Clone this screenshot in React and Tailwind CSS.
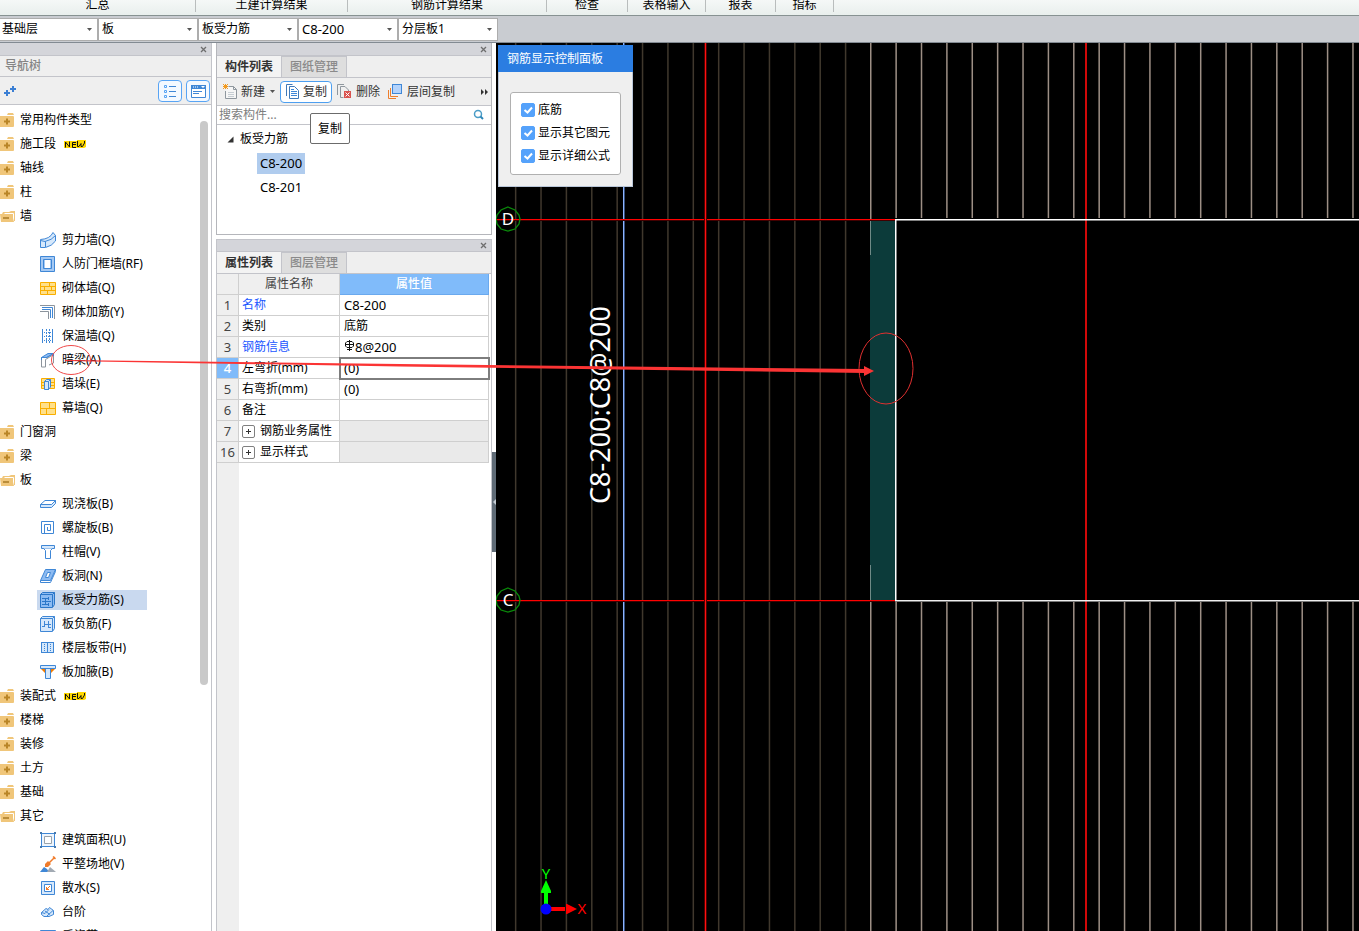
import React from "react";

const RIBBON = [
  { label: "汇总", width: "w-[196px]" },
  { label: "土建计算结果", width: "w-[152px]" },
  { label: "钢筋计算结果", width: "w-[199px]" },
  { label: "检查", width: "w-[81px]" },
  { label: "表格输入", width: "w-[78px]" },
  { label: "报表", width: "w-[70px]" },
  { label: "指标", width: "w-[58px]" },
];

const SELECTORS = [
  { label: "楼层", value: "基础层" },
  { label: "构件大类", value: "板" },
  { label: "构件类型", value: "板受力筋" },
  { label: "构件", value: "C8-200" },
  { label: "分层", value: "分层板1" },
];

const TREE = [
  { label: "常用构件类型" },
  { label: "施工段", isNew: true },
  { label: "轴线" },
  { label: "柱" },
  {
    label: "墙",
    children: [
      { label: "剪力墙(Q)", icon: "shearWall" },
      { label: "人防门框墙(RF)", icon: "doorFrame" },
      { label: "砌体墙(Q)", icon: "brick" },
      { label: "砌体加筋(Y)", icon: "corner" },
      { label: "保温墙(Q)", icon: "insulation" },
      { label: "暗梁(A)", icon: "hiddenBeam" },
      { label: "墙垛(E)", icon: "pier" },
      { label: "幕墙(Q)", icon: "curtain" },
    ],
  },
  { label: "门窗洞" },
  { label: "梁" },
  {
    label: "板",
    children: [
      { label: "现浇板(B)", icon: "slab" },
      { label: "螺旋板(B)", icon: "spiral" },
      { label: "柱帽(V)", icon: "cap" },
      { label: "板洞(N)", icon: "hole" },
      { label: "板受力筋(S)", icon: "rebar", selected: true },
      { label: "板负筋(F)", icon: "negRebar" },
      { label: "楼层板带(H)", icon: "band" },
      { label: "板加腋(B)", icon: "haunch" },
    ],
  },
  { label: "装配式", isNew: true },
  { label: "楼梯" },
  { label: "装修" },
  { label: "土方" },
  { label: "基础" },
  {
    label: "其它",
    children: [
      { label: "建筑面积(U)", icon: "area" },
      { label: "平整场地(V)", icon: "ground" },
      { label: "散水(S)", icon: "apron" },
      { label: "台阶", icon: "steps" },
      { label: "后浇带", icon: "strip" },
    ],
  },
];

const B = "#3f87d6";
const L = "#d6e8fb";
const Y = "#f9ae00";

const ICONS = {
  shearWall: (
    <>
      <path d="M.5 7.500Q10 7 13 .5L15.500 3.500V9Q12 14 5.500 15.500H.5Z" fill={L} stroke={B} />
      <path d="M.5 8.500L5 9.500Q12 8 15.500 3.500M5.500 9.500V15" fill="none" stroke={B} />
    </>
  ),
  doorFrame: (
    <>
      <path d="M.5.5H14.500V15.500H.5Z" fill="#a5c9f3" stroke={B} />
      <path d="M3.500 3.500H11.500V12.500H3.500Z" fill="#a5c9f3" stroke={B} />
      <path d="M5 4H10V12H5Z" fill="#fff" />
    </>
  ),
  brick: (
    <>
      <path d="M.5 2.500H15.500V14.500H.5Z" fill="#ffe08a" stroke={Y} />
      <path d="M0 6.500H16M0 10.500H16M9.500 3V6M4.500 7V10M11.500 7V10M7.500 11V14" stroke={Y} />
    </>
  ),
  corner: (
    <>
      <path d="M0 1.500H14.500V15M0 7.500H8.500V15" fill="none" stroke="#8c949c" />
      <path d="M2 3.500H12.500V14M2 5.500H10.500V14" fill="none" stroke={B} />
    </>
  ),
  insulation: (
    <>
      <path d="M2.500 1V15M12.500 1V15" stroke={B} strokeWidth="1" />
      <path d="M6.500 1V15M9.500 1V15" stroke={B} strokeDasharray="2 1" />
      <path d="M2 4.500H13M2 8.500H13M2 12.500H13" stroke={B} strokeDasharray="1 1" />
    </>
  ),
  hiddenBeam: (
    <>
      <path d="M1.500 5.500L8 1.500H13.500L7 5.500Z" fill="#8dbbf2" stroke={B} />
      <path d="M1.500 5.500V15H5.500V7.500L8 6L13.500 2.500V11L9 13" fill="none" stroke="#8c949c" />
      <path d="M1.500 8V5.500H6.500L13.500 1.500V4" fill="none" stroke={B} />
    </>
  ),
  pier: (
    <>
      <path d="M1.500 2.500H14.500V12.500H1.500Z" fill="#ffe08a" stroke={Y} />
      <path d="M2 6.500H14M2 9.500H14" stroke={Y} />
      <path d="M4.500 5.500L6.500 3.500H10.500V11L8.500 13.500H4.500Z" fill={L} stroke={B} />
      <path d="M4.500 5.500H8.500V14M8.500 5.500L10.500 3.500" fill="none" stroke={B} />
    </>
  ),
  curtain: (
    <>
      <path d="M.5 2.500H15.500V14.500H.5Z" fill="#ffe08a" stroke={Y} />
      <path d="M0 8.500H16M9.500 3V8M6.500 9V14" stroke={Y} />
    </>
  ),
  slab: (
    <>
      <path d="M.5 8.500L5 4.500H15.500L11.500 8.500Z" fill="#fff" stroke={B} />
      <path d="M.5 8.500H11.500L15.500 4.500V7.500L11.500 11.500H.5Z" fill={L} stroke={B} />
    </>
  ),
  spiral: (
    <>
      <path d="M1.500 13V1.500H13.500V13.500H4.500V4.500H10.500V10.500H7.500V7" fill="none" stroke={B} />
      <path d="M1.500 13.500H5" stroke={B} />
    </>
  ),
  cap: (
    <>
      <path d="M1.500 1.500H14.500V4.500H1.500Z" fill={L} stroke={B} />
      <path d="M3.500 4.500L5.500 6.500V14.500H10.500V6.500L12.500 4.500" fill="#fff" stroke={B} />
    </>
  ),
  hole: (
    <>
      <path d="M.5 12.500L5.500 1.500H15.500L10.500 12.500Z" fill="#8dbbf2" stroke={B} />
      <path d="M.5 12.500V14.500H10.500L15.500 3.500V1.500" fill="none" stroke={B} />
      <path d="M5.500 9.500L7.500 4.500H10.500L8.500 9.500Z" fill="#fff" stroke={B} />
    </>
  ),
  rebar: (
    <>
      <path d="M.5 2.500L2.500.5H14.500V12.500L12.500 15.500H.5Z" fill="#8dbbf2" stroke="#2c77c9" />
      <path d="M.5 2.500H12.500V15M12.500 2.500L14.500.5M2 6.500H8M2 12.500H8M2 9.500H11M8.500 5V8M8.500 11V14M5.500 7V12" fill="none" stroke="#2c77c9" />
    </>
  ),
  negRebar: (
    <>
      <path d="M.5 2.500L2.500.5H14.500V12.500L12.500 15.500H.5Z" fill={L} stroke={B} />
      <path d="M.5 2.500H12.500V15M12.500 2.500L14.500.5M4.500 5V11M8.500 5V12M2 10.500H5M5 8.500H11M9 11.500H11" fill="none" stroke={B} />
    </>
  ),
  band: (
    <>
      <path d="M1 2H14V13H1Z" fill={L} />
      <path d="M1 2.500H14M1 12.500H14M1.500 2V13M7.500 2V13M13.500 2V13" stroke={B} />
      <path d="M4.500 4V12M10.500 4V12" stroke={B} strokeDasharray="1 1" />
    </>
  ),
  haunch: (
    <>
      <path d="M1 5H15L10 10H6Z" fill="#f57c00" />
      <path d="M.5 1.500H15.500V4.500H.5ZM5.500 4.500H10.500V14.500H5.500Z" fill={L} stroke={B} />
    </>
  ),
  area: (
    <>
      <path d="M1.500 1.500H14.500V14.500H1.500Z" fill="#eef5fd" stroke={B} />
      <path d="M4.500 4.500H11.500V11.500H4.500Z" fill="#fff" stroke="#9aa3ab" />
      <path d="M0 0H2V2H0ZM14 0H16V2H14ZM0 14H2V16H0ZM14 14H16V16H14Z" fill="#4779ad" />
    </>
  ),
  ground: (
    <>
      <path d="M0 16L4 11L7 13L9 16Z" fill={B} />
      <path d="M7 16L10 11L16 16Z" fill="#a2aab3" />
      <path d="M15 1L9 7M13 .5L15.500 3" stroke="#f07c2c" strokeWidth="1.500" />
      <path d="M5 8L8 5L11 8L8 11L5 11Z" fill="#f07c2c" />
    </>
  ),
  apron: (
    <>
      <path d="M1.500 1.500H14.500V14.500H1.500Z" fill={L} stroke={B} />
      <path d="M4.500 4.500H11.500V11.500H4.500Z" fill="#fff" stroke={B} />
      <path d="M10 6L6 10M6.500 7V9.500H9" fill="none" stroke="#f07c2c" />
    </>
  ),
  steps: (
    <>
      <path d="M1.500 8.500L6 4.500L8 5.500L9.500 3.500L13.500 6.500V10.500L9 12.500H4L1.500 10.500Z" fill={L} stroke={B} />
      <path d="M1.500 8.500L5 9.500L9 5.500M7 12L13 6.500M5 7L10 10.500" fill="none" stroke={B} />
    </>
  ),
  strip: (
    <>
      <path d="M.5 2.500H15.500V14.500H.5Z" fill="#a5c9f3" stroke={B} />
      <path d="M6 14L10 3" stroke="#fff" />
    </>
  ),
};

function TreeIcon({ name }) {
  return (
    <svg width="16" height="16" viewBox="0 0 16 16" className="shrink-0" aria-hidden="true">
      {ICONS[name]}
    </svg>
  );
}

function Folder({ open }) {
  return (
    <svg width="15" height="14" viewBox="0 0 15 14" className="shrink-0" aria-hidden="true">
      {open ? (
        <>
          <path d="M3 3L9 3L11 2H15V12H12V5H2Z" fill="#f0c67a" />
          <path d="M4.500 4.500H13.500V12" fill="none" stroke="#fff" />
          <path d="M0 5H12L14 13H1Z" fill="#f0c67a" />
          <path d="M3 9H9" stroke="#a87a26" strokeWidth="1.500" />
        </>
      ) : (
        <>
          <path d="M8 0H13L14 2H7Z" fill="#f0c67a" />
          <rect x="-2" y="3" width="16" height="11" rx="1" fill="#f0c67a" />
          <path d="M4 8.500H10M7 5.500V11.500" stroke="#b98527" strokeWidth="2" />
        </>
      )}
    </svg>
  );
}

function NewBadge() {
  return (
    <svg width="22" height="9" viewBox="0 0 22 9" className="ml-2" role="img" aria-label="NEW">
      <path d="M0 1H13V0H22V7L20 8H0Z" fill="#ffd800" />
      <path d="M1.500 7.500V2L5.500 7V1.500M12 2.500H8.500V7.500H12M8.500 4.500H12M13.500 1V6.500H15L17 3.500V6.500H18.500L20.500 3V1" fill="none" stroke="#111" />
    </svg>
  );
}

function CloseButton() {
  return (
    <button type="button" aria-label="关闭" className="flex size-3 items-center justify-center">
      <svg width="7" height="7" viewBox="0 0 7 7" aria-hidden="true">
        <path d="M1 1L6 6M6 1L1 6" stroke="#6e6e6e" strokeWidth="1.300" />
      </svg>
    </button>
  );
}

function PanelStrip({ slim }) {
  return (
    <div
      className={
        slim
          ? "flex h-3 shrink-0 items-center justify-end border-b border-[#c3c4ca] bg-[#d4d5da] pr-0.5"
          : "flex h-[13px] shrink-0 items-center justify-end border-b border-[#c3c4ca] bg-[#d4d5da] pr-0.5"
      }
    >
      <CloseButton />
    </div>
  );
}

function Tabs({ tabs }) {
  return (
    <div role="tablist" className="flex h-[22px] shrink-0 border-b border-[#c3c4ca] bg-[#efefef]">
      {tabs.map((t, i) => (
        <button
          key={t}
          type="button"
          role="tab"
          aria-selected={i === 0}
          className={
            i === 0
              ? "w-[65px] border-r border-[#c3c4ca] bg-[#f3f3f3] font-bold text-[#333]"
              : "w-[65px] border-t border-r border-[#c3c4ca] bg-[#dedede] font-medium text-[#8a8a8a]"
          }
        >
          {t}
        </button>
      ))}
    </div>
  );
}

function Caret() {
  return (
    <svg width="5" height="3" viewBox="0 0 5 3" aria-hidden="true">
      <path d="M0 0H5L2.500 3Z" fill="#555" />
    </svg>
  );
}

function Navigation() {
  return (
    <nav className="flex w-[212px] shrink-0 flex-col border-r border-[#c3c4ca] bg-white">
      <PanelStrip />
      <h2 className="flex h-[21px] shrink-0 items-center border-b border-[#c3c4ca] bg-[#efefef] pl-[5px] font-medium text-[#858585]">
        导航树
      </h2>
      <div className="flex h-7 shrink-0 items-center gap-1 border-b border-[#c3c4ca] bg-[#efefef] pr-px pl-1">
        <button type="button" aria-label="展开" className="mr-auto">
          <svg width="12" height="12" viewBox="0 0 12 12" aria-hidden="true">
            <path d="M0 8H6M3 5V11M6 4H12M9 1V7" stroke="#3b7fd4" strokeWidth="2" />
          </svg>
        </button>
        <button type="button" aria-label="列表视图" className="flex h-[22px] w-6 items-center justify-center rounded-sm border border-[#58a4f4] bg-[#f4f9ff]">
          <svg width="14" height="14" viewBox="0 0 14 14" aria-hidden="true">
            <path d="M1.500 1.500H3.500V3.500H1.500ZM1.500 6.500H3.500V8.500H1.500ZM1.500 11.500H3.500V13.500H1.500Z" fill="none" stroke="#58a4f4" />
            <path d="M6 2.500H13M6 7.500H13M6 12.500H13" stroke="#3f87d6" />
          </svg>
        </button>
        <button type="button" aria-label="面板视图" className="flex h-[22px] w-6 items-center justify-center rounded-sm border border-[#58a4f4] bg-[#f4f9ff]">
          <svg width="15" height="14" viewBox="0 0 15 14" aria-hidden="true">
            <path d="M.5 1.500H14.500V13.500H.5Z" fill="#fff" stroke="#3f87d6" />
            <path d="M0 1H15V5H0Z" fill="#3f87d6" />
            <path d="M2 3H7" stroke="#fff" strokeDasharray="1 1" />
            <path d="M10 2H14L12 4Z" fill="#fff" />
            <path d="M2 7.500H11M2 9.500H8" stroke="#3f87d6" />
          </svg>
        </button>
      </div>
      <div className="flex min-h-0 flex-1 overflow-hidden pt-[3px]">
        <ul className="flex-1">
          {TREE.map((node) => (
            <li key={node.label}>
              <a href="#" className="flex h-6 items-center">
                <Folder open={Boolean(node.children)} />
                <span className="ml-[5px]">{node.label}</span>
                {node.isNew && <NewBadge />}
              </a>
              {node.children && (
                <ul>
                  {node.children.map((c) => (
                    <li key={c.label} className="flex h-6 items-center pl-[37px]">
                      <a
                        href="#"
                        className={
                          c.selected
                            ? "flex h-5 w-[110px] items-center gap-1.5 bg-[#c9d9ef] pl-[3px] whitespace-nowrap"
                            : "flex h-5 items-center gap-1.5 pl-[3px] whitespace-nowrap"
                        }
                      >
                        <TreeIcon name={c.icon} />
                        {c.label}
                      </a>
                    </li>
                  ))}
                </ul>
              )}
            </li>
          ))}
        </ul>
        <div className="mt-[13px] mr-[3px] h-[564px] w-2 shrink-0 rounded-full bg-[#c9c9c9]" />
      </div>
    </nav>
  );
}

function ComponentList() {
  return (
    <section className="flex h-[192px] shrink-0 flex-col border border-t-0 border-[#b5b6bb] bg-white">
      <PanelStrip />
      <Tabs tabs={["构件列表", "图纸管理"]} />
      <div className="flex h-7 shrink-0 items-center border-b border-[#c3c4ca] bg-[#efefef] pl-1.5 text-[#333]">
        <button type="button" className="flex items-center gap-[3px]">
          <svg width="15" height="16" viewBox="0 0 15 16" aria-hidden="true">
            <path d="M5.500 2.500H10.500L13.500 5.500V14.500H2.500V7" fill="#f6f6f6" stroke="#8f979e" />
            <path d="M10.500 2.500V5.500H13.500" fill="none" stroke="#8f979e" />
            <path d="M5 8.500H11M5 10.500H11M5 12.500H11" stroke="#c6cdd3" />
            <path d="M0 0H1V1H0ZM2 0H3V1H2ZM4 0H5V1H4ZM1 1H4V4H1ZM0 2H5V3H0ZM0 4H1V5H0ZM2 4H3V5H2ZM4 4H5V5H4Z" fill="#f39a1e" />
          </svg>
          新建
        </button>
        <button type="button" aria-label="新建选项" className="px-[5px]">
          <Caret />
        </button>
        <button type="button" className="flex h-[22px] w-[52px] items-center gap-1 rounded-sm border border-[#4d9ff0] bg-white pl-[5px] whitespace-nowrap">
          <svg width="13" height="15" viewBox="0 0 13 15" className="shrink-0" aria-hidden="true">
            <path d="M.5 12V.5H6.500M3.500 14.500V2.500H8.500L12.500 6.500V14.500Z" fill="none" stroke="#4079b8" />
            <path d="M5 7.500H11M5 9.500H11M5 11.500H11M5 5.500H8" stroke="#3f87d6" />
          </svg>
          复制
        </button>
        <button type="button" className="ml-[5px] flex items-center gap-1">
          <svg width="15" height="15" viewBox="0 0 15 15" aria-hidden="true">
            <path d="M.5 11V.5H7M6.500 13.500H3.500V2.500H8L11.500 6V7" fill="none" stroke="#8f979e" />
            <rect x="7" y="7" width="7" height="7" fill="#d9534f" />
            <path d="M8.500 8.500L12.500 12.500M12.500 8.500L8.500 12.500" stroke="#fff" />
          </svg>
          删除
        </button>
        <button type="button" className="ml-2 flex items-center gap-1">
          <svg width="15" height="16" viewBox="0 0 15 16" aria-hidden="true">
            <path d="M.5 6V14.500H8M2.500 4V12.500H10" fill="none" stroke="#ee7f2d" />
            <rect x="4.500" y=".5" width="9" height="9" fill="#b4d3fb" stroke="#3f87d6" />
          </svg>
          层间复制
        </button>
        <button type="button" aria-label="更多" className="mr-[3px] ml-auto">
          <svg width="7" height="6" viewBox="0 0 7 6" aria-hidden="true">
            <path d="M0 0L3 3L0 6ZM4 0L7 3L4 6Z" fill="#333" />
          </svg>
        </button>
      </div>
      <div className="flex h-[19px] shrink-0 items-center border-b border-[#c3c4ca] pr-1.5">
        <input
          type="text"
          aria-label="搜索构件"
          placeholder="搜索构件..."
          className="h-4 min-w-0 flex-1 bg-transparent pl-0.5 outline-none placeholder:text-[#7d7d7d]"
        />
        <svg width="12" height="12" viewBox="0 0 12 12" aria-hidden="true">
          <circle cx="5" cy="5" r="3.500" fill="none" stroke="#4a9cc7" strokeWidth="1.500" />
          <path d="M7.500 7.500L10 10" stroke="#2e86b8" strokeWidth="2" />
        </svg>
      </div>
      <ul className="pt-0.5">
        <li>
          <div className="flex h-6 items-center gap-1.5 pl-2.5">
            <svg width="7" height="7" viewBox="0 0 7 7" aria-hidden="true">
              <path d="M6.500.5V6.500H.5Z" fill="#333" />
            </svg>
            板受力筋
          </div>
          <ul className="pl-10 text-[13px]">
            <li className="flex h-6 items-center">
              <a href="#" className="flex h-[21px] w-12 items-center justify-center bg-[#b0ccee]">C8-200</a>
            </li>
            <li className="flex h-6 items-center">
              <a href="#" className="flex h-[21px] w-12 items-center justify-center">C8-201</a>
            </li>
          </ul>
        </li>
      </ul>
    </section>
  );
}

const PROPS = [
  { n: 1, name: "名称", value: "C8-200", link: true },
  { n: 2, name: "类别", value: "底筋" },
  { n: 3, name: "钢筋信息", value: "8@200", link: true, steel: true },
  { n: 4, name: "左弯折(mm)", value: "(0)", active: true },
  { n: 5, name: "右弯折(mm)", value: "(0)" },
  { n: 6, name: "备注", value: "" },
  { n: 7, name: "钢筋业务属性", group: true },
  { n: 16, name: "显示样式", group: true },
];

function PropertyList() {
  return (
    <section className="mt-1 flex min-h-0 flex-1 flex-col border border-b-0 border-[#c3c4ca] bg-white">
      <PanelStrip slim />
      <Tabs tabs={["属性列表", "图层管理"]} />
      <div className="flex min-h-0 flex-1 flex-col pr-0.5">
        <table className="w-full table-fixed border-separate border-spacing-0">
          <thead>
            <tr className="h-[21px]">
              <th className="w-[22px] border-r border-b border-[#cfcfcf] bg-[#efefef] p-0" aria-label="序号" />
              <th className="w-[101px] border-r border-b border-[#cfcfcf] bg-[#efefef] p-0 font-normal text-[#444]">属性名称</th>
              <th className="border-r border-b border-[#6aa9ee] bg-[#80bbfa] p-0 font-medium text-white">属性值</th>
            </tr>
          </thead>
          <tbody>
            {PROPS.map((p) => (
              <tr key={p.n} className="h-[21px]">
                <th
                  className={
                    p.active
                      ? "border-r border-b border-[#cfcfcf] bg-[#80bbfa] p-0 text-[13px] leading-4 font-medium text-white"
                      : "border-r border-b border-[#cfcfcf] bg-[#efefef] p-0 text-[13px] leading-4 font-normal text-[#444]"
                  }
                >
                  {p.n}
                </th>
                <td className="border-r border-b border-[#cfcfcf] p-0 pl-[3px] leading-4 whitespace-nowrap">
                  {p.group ? (
                    <span className="flex items-center gap-[5px]">
                      <button type="button" aria-label="展开" className="flex size-[13px] items-center justify-center rounded-xs border border-[#808080] bg-white">
                        <svg width="5" height="5" viewBox="0 0 5 5" aria-hidden="true">
                          <path d="M0 2.500H5M2.500 0V5" stroke="#333" />
                        </svg>
                      </button>
                      {p.name}
                    </span>
                  ) : (
                    <span className={p.link ? "text-[#1a56ff]" : ""}>{p.name}</span>
                  )}
                </td>
                <td
                  className={
                    p.group
                      ? "border-r border-b border-[#cfcfcf] bg-[#eaeaea] p-0"
                      : p.active
                        ? "border-r border-b border-[#cfcfcf] p-0 pl-1 leading-4 outline-2 -outline-offset-1 outline-[#7d7d7d]"
                        : "border-r border-b border-[#cfcfcf] p-0 pl-1 leading-4"
                  }
                >
                  <span className="flex items-center text-[13px]">
                    {p.steel && (
                      <svg width="11" height="11" viewBox="0 0 11 11" className="mb-1" aria-hidden="true">
                        <path d="M5.500 0V11M3 1.500H8L9.500 3V6L8 7.500H3L1.500 6V3ZM1 4.500H10M3 9.500H8" fill="none" stroke="#111" />
                      </svg>
                    )}
                    {p.value === "底筋" ? <span className="text-xs leading-4">{p.value}</span> : p.value}
                  </span>
                </td>
              </tr>
            ))}
          </tbody>
        </table>
        <div className="w-[22px] flex-1 bg-[#efefef]" />
      </div>
    </section>
  );
}

// Drawing coordinates below are relative to the canvas' top left corner.
const DIM = Array.from({ length: 14 }, (_, i) => 18.9 + i * 25.38);
const BRIGHT = Array.from({ length: 20 }, (_, i) => 374 + i * 25.38);

function Drawing() {
  return (
    <svg className="block h-full w-full" role="img" aria-label="板受力筋平面图">
      <rect width="100%" height="100%" fill="#000" />
      {DIM.map((x) => (
        <rect key={x} x={x} y="0" width="1.500" height="100%" fill="#40382d" />
      ))}
      {BRIGHT.map((x, i) => (
        <g key={x} fill="#9d8f85">
          <rect x={x} y="0" width="1.500" height={i === 0 ? 212 : 175} />
          <rect x={x} y={i === 0 ? 522 : 559} width="1.500" height="100%" />
        </g>
      ))}
      <rect x="374" y="177" width="25" height="380" fill="#0c3b3a" />
      <rect x="374" y="177" width="1" height="35" fill="#6f8a86" />
      <rect x="374" y="522" width="1" height="35" fill="#6f8a86" />
      <rect x="127" y="0" width="1" height="100%" fill="#8db4ff" />
      <rect x="128" y="0" width="1" height="100%" fill="#36507f" />
      <rect x="0" y="176" width="399" height="1" fill="#ff0000" />
      <rect x="0" y="177" width="399" height="1" fill="#400000" />
      <rect x="0" y="557" width="399" height="1" fill="#ff0000" />
      <rect x="0" y="558" width="399" height="1" fill="#400000" />
      <rect x="208" y="0" width="3" height="100%" fill="#500000" />
      <rect x="209" y="0" width="1" height="100%" fill="#ff1010" />
      <rect x="589" y="0" width="2" height="100%" fill="#d00808" />
      <rect x="399" y="176" width="100%" height="1.500" fill="#fff" />
      <rect x="399" y="557" width="100%" height="1.500" fill="#eee" />
      <rect x="399" y="176" width="1.500" height="382" fill="#fff" />
      {[
        ["D", 176],
        ["C", 557],
      ].map(([label, y]) => (
        <g key={label}>
          <path
            d="M0 -12L7 -9L11 -4L12 0L11 5L7 10L0 12L-7 10L-11 5L-12 0L-11 -4L-7 -9Z"
            transform={`translate(12 ${y})`}
            fill="none"
            stroke="#0a8a0a"
            strokeWidth="1.300"
          />
          <text x="12" y={y + 6} textAnchor="middle" fontSize="17" fill="#fff">
            {label}
          </text>
        </g>
      ))}
      <text transform="translate(114 461) rotate(-90)" fontSize="27" fill="#fff">
        C8-200:C8@200
      </text>
      <g>
        <path d="M50 866V848" stroke="#00ff00" strokeWidth="4" />
        <path d="M50 837L55 848V850H45V848Z" fill="#00ff00" />
        <path d="M50 866H69" stroke="#ff0000" strokeWidth="4" />
        <path d="M81 866L71 861H70V871H71Z" fill="#ff0000" />
        <circle cx="50" cy="866" r="5.500" fill="#0000ff" />
        <text x="50" y="836" textAnchor="middle" fontSize="15" fill="#00ff00">Y</text>
        <text x="86" y="871" textAnchor="middle" fontSize="15" fill="#ff0000">X</text>
      </g>
    </svg>
  );
}

function DisplayPanel() {
  return (
    <form className="absolute top-0.5 left-0.5 w-[135px] border border-[#b9c6d8] bg-[#efefef] pb-[11px]">
      <h2 className="-mx-px -mt-px flex h-[27px] items-center bg-[#2b7de1] pl-[9px] text-white">钢筋显示控制面板</h2>
      <fieldset className="mx-[11px] mt-5 flex flex-col rounded-[3px] border border-[#b0b0b0] bg-white px-2.5 pt-[5px] pb-[7px]">
        {["底筋", "显示其它图元", "显示详细公式"].map((t) => (
          <label key={t} className="flex h-[23px] items-center gap-[3px] whitespace-nowrap">
            <span className="relative size-3.5 shrink-0">
              <input type="checkbox" defaultChecked className="peer block size-3.5 appearance-none rounded-xs border border-[#55a2fb] bg-white checked:bg-[#55a2fb]" />
              <svg viewBox="0 0 14 14" className="pointer-events-none absolute inset-0 hidden peer-checked:block" aria-hidden="true">
                <path d="M3.500 7L6.500 9.500L11 4.500" fill="none" stroke="#fff" strokeWidth="2" />
              </svg>
            </span>
            {t}
          </label>
        ))}
      </fieldset>
    </form>
  );
}

export default function App() {
  return (
    <div className="relative flex h-screen flex-col overflow-hidden bg-white font-['Noto_Sans','Noto_Sans_CJK_SC',sans-serif] text-xs leading-4 text-black">
      <header className="flex h-4 shrink-0 border-b border-[#879292] bg-linear-to-b from-[#f5f8f7] to-[#e9efed]">
        {RIBBON.map((r) => (
          <div key={r.label} className={`${r.width} flex items-start justify-center`}>
            <span className="-mt-0.5 flex-1 text-center leading-[14px] whitespace-nowrap">{r.label}</span>
            <span className="h-3 w-px bg-[#b9bdbd]" />
          </div>
        ))}
      </header>
      <div className="flex h-[27px] shrink-0 items-center border-b border-[#828a92] bg-[#c9ccd1]">
        {SELECTORS.map((s, i) => (
          <div key={s.label} className={i === 0 ? "relative w-[98px]" : "relative w-[100px]"}>
            <select
              aria-label={s.label}
              className={
                i === 0
                  ? "block h-[23px] w-full appearance-none border-y border-r border-[#adadad] bg-white pl-0.5"
                  : s.value === "C8-200"
                    ? "block h-[23px] w-full appearance-none border border-[#adadad] bg-white pl-[3px] text-[13px]"
                    : "block h-[23px] w-full appearance-none border border-[#adadad] bg-white pl-[3px]"
              }
            >
              <option>{s.value}</option>
            </select>
            <span className="pointer-events-none absolute inset-y-0 right-1.5 flex items-center">
              <Caret />
            </span>
          </div>
        ))}
      </div>
      <div className="flex min-h-0 flex-1">
        <Navigation />
        <div className="ml-1 flex w-[276px] shrink-0 flex-col">
          <ComponentList />
          <PropertyList />
        </div>
        <div className="flex w-1 shrink-0 flex-col">
          <button type="button" aria-label="折叠面板" className="mt-[409px] flex h-[100px] items-center bg-[#5f6b76]">
            <svg width="4" height="6" viewBox="0 0 4 6" aria-hidden="true">
              <path d="M4 0V6L1 3Z" fill="#c4ccd3" />
            </svg>
          </button>
        </div>
        <main className="relative min-w-0 flex-1 overflow-hidden bg-black">
          <Drawing />
          <DisplayPanel />
        </main>
      </div>
      <div role="tooltip" className="absolute top-[113px] left-[310px] flex h-[31px] w-10 items-center justify-center rounded-xs border border-[#6b6b6b] bg-white">
        复制
      </div>
      <svg className="pointer-events-none absolute inset-0 h-full w-full" aria-hidden="true">
        <ellipse cx="71" cy="360" rx="19.500" ry="14.500" fill="none" stroke="#f04a4a" />
        <ellipse cx="886" cy="368.500" rx="27" ry="35.500" fill="none" stroke="#e03030" />
        <path d="M65 360L400 364L865 369V373L400 366.500L65 361Z" fill="#fb3434" />
        <path d="M864 366L874 371L864 376Z" fill="#fb3434" />
      </svg>
    </div>
  );
}
